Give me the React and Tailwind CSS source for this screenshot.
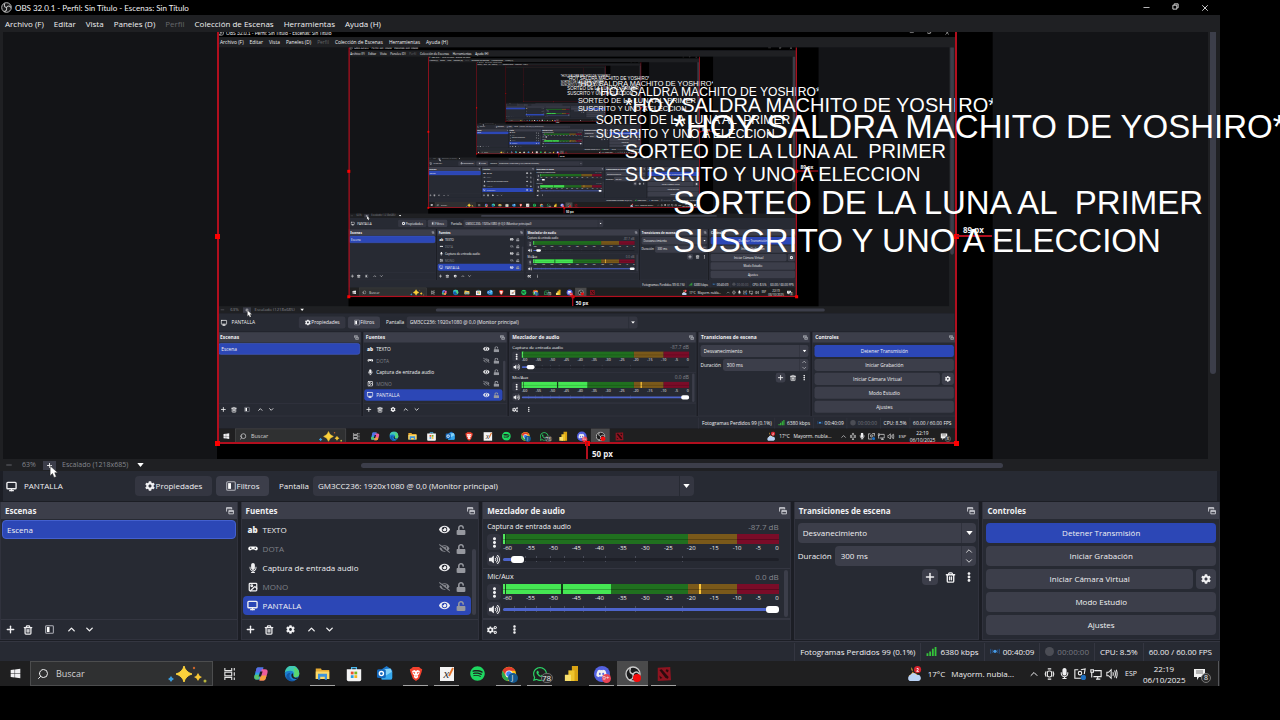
import { ChevronDown, ChevronUp, Image, Minus, Monitor, Plus, Search, Trash2, X } from "lucide-react";
import {
    FaCog,
    FaCogs,
    FaDiscord,
    FaEllipsisV,
    FaEye,
    FaEyeSlash,
    FaMicrophone,
    FaSpotify,
    FaUnlock,
    FaVolumeUp,
    FaWhatsapp,
    FaWindows,
} from "react-icons/fa";

const MIRROR_DEPTH = 6;

const menus = ["Archivo (F)", "Editar", "Vista", "Paneles (D)", "Perfil", "Colección de Escenas", "Herramientas", "Ayuda (H)"];

const sources = [
    { name: "TEXTO", icon: "text", visible: true },
    { name: "DOTA", icon: "game", visible: false },
    { name: "Captura de entrada audio", icon: "mic", visible: true },
    { name: "MONO", icon: "image", visible: false },
    { name: "PANTALLA", icon: "monitor", visible: true, selected: true },
];

const channels = [
    { name: "Captura de entrada audio", db: "-87.7 dB", volume: 3, level: 0 },
    { name: "Mic/Aux", db: "0.0 dB", volume: 100, level: 39, dip: 21, peak: 71 },
];

const scale = ["-60", "-55", "-50", "-45", "-40", "-35", "-30", "-25", "-20", "-15", "-10", "-5", "0"];
const sliderTicks = [4, 8, 12, 17, 22, 29, 37, 48, 65];

const caption = "*HOY SALDRA MACHITO DE YOSHIRO*\n\nSORTEO DE LA LUNA AL  PRIMER\nSUSCRITO Y UNO A ELECCION";

const Caret = () => (
    <svg viewBox="0 0 8 5" className="h-1 w-[7px] fill-white" aria-hidden="true">
        <path d="M0 0h8L4 5z" />
    </svg>
);

const FloatIcon = () => (
    <svg viewBox="0 0 14 14" className="size-2" fill="none" stroke="#d5d6dc" strokeWidth="1.5" aria-hidden="true">
        <path d="M1 8V1h9v3M1 3h9M5 6h8v6H5zM5 8h8" />
    </svg>
);

const FilterIcon = ({ className }) => (
    <svg viewBox="0 0 14 14" className={className} aria-hidden="true">
        <rect x="1" y="1" width="12" height="12" rx="1.5" fill="none" stroke="#aeb0b8" strokeWidth="1.6" />
        <rect x="3" y="3" width="4" height="8" fill="#fff" />
    </svg>
);

const ObsLogo = ({ className }) => (
    <svg viewBox="0 0 24 24" className={className} aria-hidden="true">
        <circle cx="12" cy="12" r="10.5" fill="#1b1b1c" stroke="#c9c9c9" strokeWidth="2" />
        <g fill="none" stroke="#c9c9c9" strokeWidth="2.2" strokeLinecap="round">
            <path d="M8 4c-2 4 0 7 4 8" />
            <path d="M20.900 11.500c-2.400-3.700-6-3.500-8.900.500" />
            <path d="M7.100 20.500c4.400-.300 6.100-3.500 4.900-8.500" />
        </g>
    </svg>
);

const SourceIcon = ({ type }) => {
    if (type === "text") return <span className="font-extrabold leading-none">ab</span>;
    if (type === "game") {
        return (
            <svg viewBox="0 0 20 10" className="w-[10px]" aria-hidden="true">
                <path fill="#fff" d="M5 1h10a4 4 0 0 1 1 8c-2 0-2-2-4-2H8C6 7 6 9 4 9a4 4 0 0 1 1-8z" />
                <circle cx="5.5" cy="4.5" r="1.5" fill="#272a33" />
                <circle cx="14.5" cy="4.5" r="1.5" fill="#272a33" />
            </svg>
        );
    }
    if (type === "mic") return <FaMicrophone className="size-[10px]" />;
    if (type === "image") return <Image className="size-[10px]" strokeWidth={3} />;
    return <Monitor className="size-[11px]" strokeWidth={3} />;
};

const IconButton = ({ label, children, className = "" }) => (
    <button aria-label={label} className={`flex h-4 w-[18px] items-center justify-center ${className}`}>
        {children}
    </button>
);

const Dock = ({ title, footer, children }) => (
    <section className="flex min-w-0 flex-col border-x border-b border-[#30323d] bg-[#272a33]">
        <header className="flex h-[17px] items-center justify-between bg-[#3c3e4a] pl-1 pr-[3px]">
            <h2 className="font-bold">{title}</h2>
            <button aria-label={`Desacoplar ${title}`}>
                <FloatIcon />
            </button>
        </header>
        <div className="flex-1">{children}</div>
        {footer && <footer className="flex h-5 items-center border-t border-[#343641]">{footer}</footer>}
    </section>
);

const Scenes = () => (
    <Dock
        title="Escenas"
        footer={
            <>
                <IconButton label="Añadir escena"><Plus className="size-[11px]" strokeWidth={3} /></IconButton>
                <IconButton label="Eliminar escena"><Trash2 className="size-[10px]" strokeWidth={3} /></IconButton>
                <IconButton label="Filtros de escena" className="ml-[3px]"><FilterIcon className="size-[9px]" /></IconButton>
                <IconButton label="Subir escena" className="ml-1"><ChevronUp className="size-[11px]" strokeWidth={3} /></IconButton>
                <IconButton label="Bajar escena"><ChevronDown className="size-[11px]" strokeWidth={3} /></IconButton>
            </>
        }
    >
        <ul className="p-px">
            <li className="flex h-[19px] items-center rounded-sm border border-[#4460cf] bg-[#2c47b6] pl-1">Escena</li>
        </ul>
    </Dock>
);

const Sources = () => (
    <Dock
        title="Fuentes"
        footer={
            <>
                <IconButton label="Añadir fuente"><Plus className="size-[11px]" strokeWidth={3} /></IconButton>
                <IconButton label="Eliminar fuente"><Trash2 className="size-[10px]" strokeWidth={3} /></IconButton>
                <IconButton label="Propiedades de fuente" className="ml-1"><FaCog className="size-[9px]" /></IconButton>
                <IconButton label="Subir fuente" className="ml-[3px]"><ChevronUp className="size-[11px]" strokeWidth={3} /></IconButton>
                <IconButton label="Bajar fuente"><ChevronDown className="size-[11px]" strokeWidth={3} /></IconButton>
            </>
        }
    >
        <div className="flex p-px">
            <ul className="flex-1">
                {sources.map((source) => (
                    <li
                        key={source.name}
                        className={`flex h-[19px] items-center rounded-sm pr-[5px] ${source.selected ? "bg-[#2c47b6]" : ""}`}
                    >
                        <span className="flex w-5 justify-center">
                            <SourceIcon type={source.icon} />
                        </span>
                        <span className={`flex-1 ${source.visible ? "" : "text-[#7f8188]"}`}>{source.name}</span>
                        <button aria-label={`Visibilidad de ${source.name}`} className="flex w-[17px]">
                            {source.visible ? <FaEye className="size-[11px]" /> : <FaEyeSlash className="size-[11px] text-[#85878e]" />}
                        </button>
                        <button aria-label={`Bloquear ${source.name}`}>
                            <FaUnlock className="size-[10px] text-[#96989f]" />
                        </button>
                    </li>
                ))}
            </ul>
            <div className="flex w-[6px] flex-col justify-end pl-px">
                <div className="h-[66px] w-1 rounded-full bg-[#3c3e4a]" />
            </div>
        </div>
    </Dock>
);

const Channel = ({ channel }) => (
    <div className="h-[50px] border-b border-[#343641] pl-1 pr-[11px]">
        <div className="flex h-[15px] items-center justify-between">
            <span className="text-[7px]">{channel.name}</span>
            <span className="text-[#85878e]">{channel.db}</span>
        </div>
        <div className="flex gap-[2px]">
            <button aria-label={`Opciones de ${channel.name}`} className="flex h-4 w-[14px] items-center justify-center rounded-sm bg-[#32343f]">
                <FaEllipsisV className="size-[11px]" />
            </button>
            <div className="flex-1">
                <div className="relative flex h-[10px]">
                    <div className="w-[67%] bg-[#20701f]" />
                    <div className="w-[18%] bg-[#7a591a]" />
                    <div className="w-[15%] bg-[#7a0c28]" />
                    <div className="absolute inset-y-0 left-0 bg-[#45e653]" style={{ width: `${channel.level}%` }} />
                    <div className="absolute inset-y-0 left-0 w-[3px] border-r border-[#15401b] bg-[#53e95e]" />
                    {channel.dip && <div className="absolute inset-y-0 w-[2px] bg-[#133b18]" style={{ left: `${channel.dip}%` }} />}
                    {channel.peak && <div className="absolute inset-y-0 w-[2px] bg-[#ffc83c]" style={{ left: `${channel.peak}%` }} />}
                    <div className="absolute inset-x-0 top-[5px] h-px bg-black/25" />
                </div>
                <div className="flex h-2 justify-between text-[6px] leading-[8px]">
                    {scale.map((mark) => (
                        <span key={mark}>{mark}</span>
                    ))}
                </div>
            </div>
        </div>
        <div className="flex h-[14px] items-center gap-[2px]">
            <button aria-label={`Silenciar ${channel.name}`} className="flex h-[14px] w-[14px] items-center justify-center rounded-sm bg-[#32343f]">
                <FaVolumeUp className="size-[11px]" />
            </button>
            <div className="relative flex h-[14px] flex-1 items-center">
                {sliderTicks.map((tick) => (
                    <span key={tick} className="absolute inset-y-1 w-px bg-[#4a4d5a]" style={{ left: `${tick}%` }} />
                ))}
                <input
                    type="range"
                    aria-label={`Volumen de ${channel.name}`}
                    defaultValue={channel.volume}
                    className="relative h-[3px] w-full appearance-none rounded-full [&::-webkit-slider-thumb]:h-[7px] [&::-webkit-slider-thumb]:w-[13px] [&::-webkit-slider-thumb]:appearance-none [&::-webkit-slider-thumb]:rounded-[3px] [&::-webkit-slider-thumb]:bg-white"
                    style={{ background: `linear-gradient(to right, #4d64cb ${channel.volume}%, #1e2028 ${channel.volume}%)` }}
                />
            </div>
        </div>
    </div>
);

const Mixer = () => (
    <Dock
        title="Mezclador de audio"
        footer={
            <>
                <IconButton label="Propiedades avanzadas de audio"><FaCogs className="size-[10px]" /></IconButton>
                <IconButton label="Menú del mezclador" className="ml-1"><FaEllipsisV className="size-[9px]" /></IconButton>
            </>
        }
    >
        <div className="relative">
            {channels.map((channel) => (
                <Channel key={channel.name} channel={channel} />
            ))}
            <div className="absolute bottom-[2px] right-[2px] h-[47px] w-1 rounded-full bg-[#3c3e4a]" />
        </div>
    </Dock>
);

const Transitions = ({ id }) => (
    <Dock title="Transiciones de escena">
        <div className="flex flex-col gap-[3px] py-1 pl-[3px] pr-[2px]">
            <div className="relative flex items-center">
                <select aria-label="Transición" className="h-5 w-full appearance-none rounded-sm bg-[#3c3e4a] pl-[5px]">
                    <option>Desvanecimiento</option>
                </select>
                <span className="pointer-events-none absolute inset-y-0 right-0 flex w-[15px] items-center justify-center border-l border-[#30323d]">
                    <Caret />
                </span>
            </div>
            <div className="flex items-center gap-[3px]">
                <label htmlFor={`${id}-duration`}>Duración</label>
                <div className="flex h-5 min-w-0 flex-1 rounded-sm bg-[#3c3e4a]">
                    <input id={`${id}-duration`} defaultValue="300 ms" className="w-full min-w-0 flex-1 pl-[6px]" />
                    <div className="flex w-[15px] flex-col items-center justify-center border-l border-[#30323d]">
                        <button aria-label="Aumentar duración"><ChevronUp className="size-[10px]" /></button>
                        <button aria-label="Reducir duración"><ChevronDown className="size-[10px]" /></button>
                    </div>
                </div>
            </div>
            <div className="flex justify-end">
                <button aria-label="Añadir transición" className="flex h-4 w-4 items-center justify-center rounded-sm bg-[#3c3e4a]">
                    <Plus className="size-3" strokeWidth={3} />
                </button>
                <button aria-label="Eliminar transición" className="flex h-4 w-6 items-center justify-center">
                    <Trash2 className="size-[11px]" strokeWidth={3} />
                </button>
                <button aria-label="Más opciones" className="flex h-4 w-[14px] items-center justify-center">
                    <FaEllipsisV className="size-[10px]" />
                </button>
            </div>
        </div>
    </Dock>
);

const Controls = () => (
    <Dock title="Controles">
        <div className="flex flex-col gap-[3px] px-[3px] py-1">
            <button className="h-5 rounded-sm bg-[#2c47b6]">Detener Transmisión</button>
            <button className="h-5 rounded-sm bg-[#3c3e4a]">Iniciar Grabación</button>
            <div className="flex gap-[3px]">
                <button className="h-5 flex-1 rounded-sm bg-[#3c3e4a]">Iniciar Cámara Virtual</button>
                <button aria-label="Configurar cámara virtual" className="flex h-5 w-5 items-center justify-center rounded-sm bg-[#3c3e4a]">
                    <FaCog className="size-[10px]" />
                </button>
            </div>
            <button className="h-5 rounded-sm bg-[#3c3e4a]">Modo Estudio</button>
            <button className="h-5 rounded-sm bg-[#3c3e4a]">Ajustes</button>
        </div>
    </Dock>
);

const StatusBar = () => (
    <div className="flex h-5 items-center justify-end border-t border-[#343641] bg-[#272a33] pr-[3px] [&>div]:flex [&>div]:h-[18px] [&>div]:items-center [&>div]:gap-[3px] [&>div]:border-l [&>div]:border-[#343641] [&>div]:px-[5px]">
        <div>Fotogramas Perdidos 99 (0.1%)</div>
        <div>
            <svg viewBox="0 0 11 10" className="h-[9px] w-[11px] fill-[#35c53b]" aria-hidden="true">
                <path d="M0 7h2v3H0zM3 5h2v5H3zM6 2h2v8H6zM9 0h2v10H9z" />
            </svg>
            6380 kbps
        </div>
        <div>
            <svg viewBox="0 0 12 8" className="w-[10px]" aria-hidden="true">
                <path d="M1 1q-1 3 0 6M11 1q1 3 0 6M3 2q-1 2 0 4M9 2q1 2 0 4" fill="none" stroke="#285c9b" />
                <circle cx="6" cy="4" r="2" fill="#479be8" />
            </svg>
            00:40:09
        </div>
        <div className="text-[#777981]">
            <span className="size-[9px] rounded-full bg-[#4b4d55]" />
            00:00:00
        </div>
        <div>CPU: 8.5%</div>
        <div>60.00 / 60.00 FPS</div>
    </div>
);

const Copilot = () => (
    <svg viewBox="0 0 20 20" className="size-4">
        <path d="M6 2h7l-4 15H5c-3 0-4-2-3-5l2-7c.4-2 1-3 2-3z" fill="#2c9fe8" />
        <path d="M6 2h7l-2 6H3l1-3c.4-2 1-3 2-3z" fill="#5b6be6" />
        <path d="M11 4h4c3 0 4 2 3 5l-2 6c-.5 2-1 3-3 3H8z" fill="#ee5c9b" />
        <path d="M10 12h7l-1 3c-.5 2-1 3-3 3H8z" fill="#f5a13c" />
        <path d="M3 11h6l-2 6H5c-3 0-4-2-3-5z" fill="#5ac36b" />
        <path d="M9 7h3l-2 6H7z" fill="#1f1f20" />
    </svg>
);

const Edge = () => (
    <svg viewBox="0 0 20 20" className="size-4">
        <circle cx="10" cy="10" r="9" fill="#1b7fd1" />
        <path d="M1 9a9 9 0 0 1 18-1c1 4-2 6-5 6-2 0-3-1-2-2 1-4-1-6-4-6-4 0-6 1-7 3z" fill="#3fc9b5" />
        <path d="M12 2a9 9 0 0 1 7 8c0 3-3 4-5 4-2 0-3-1-2-2 2-4 1-7 0-10z" fill="#58d66f" />
        <path d="M8 9c-3 4 0 9 6 9-5 3-12 0-11-6 1-3 3-4 5-3z" fill="#1459a8" />
        <path d="M11 9c-3 1-2 6 2 7 2 .5 4 0 5-2-2 1-4 1-5 0-2-1-1-2-2-5z" fill="#1f1f20" />
    </svg>
);

const Explorer = () => (
    <svg viewBox="0 0 20 18" className="w-[15px]">
        <path d="M1 2h7l1 2h10v12H1z" fill="#e8ac33" />
        <path d="M1 6h18v10H1z" fill="#fbd867" />
        <path d="M4 9h12v8h-3v-4H7v4H4z" fill="#3f93da" />
    </svg>
);

const Store = () => (
    <svg viewBox="0 0 20 20" className="size-4">
        <path d="M7 5V2h6v3" fill="none" stroke="#4bb8ed" strokeWidth="1.6" />
        <path d="M1 4h18v13q0 2-2 2H3q-2 0-2-2z" fill="#f3f3f3" />
        <path d="M6 7h3.5v3.5H6z" fill="#e9512d" />
        <path d="M10.5 7H14v3.5h-3.5z" fill="#7ab51d" />
        <path d="M6 11.5h3.5V15H6z" fill="#2a9fe0" />
        <path d="M10.5 11.5H14V15h-3.5z" fill="#f6b51b" />
    </svg>
);

const Outlook = () => (
    <svg viewBox="0 0 20 18" className="w-4">
        <path d="M6 4l6-4 7 5v10q0 2-2 2H6z" fill="#1b77cc" />
        <path d="M8 4l9-1 2 5-8 5z" fill="#83d2f7" />
        <path d="M5 16l14-9v8q0 2-2 2H6z" fill="#35a8ed" />
        <rect y="4" width="11" height="11" rx="2" fill="#1469bd" />
        <circle cx="5.5" cy="9.5" r="2.6" fill="none" stroke="#fff" strokeWidth="1.7" />
    </svg>
);

const Brave = () => (
    <svg viewBox="0 0 18 20" className="h-4 w-[14px]">
        <path d="M5 1h8l2 2 2 1-1 4-3 8-4 3-4-3-3-8-1-4 2-1z" fill="#f4412d" />
        <path d="M4 6l3-1 2 1 2-1 3 1-1 4-2 2 1 2-3 2-3-2 1-2-2-2z" fill="#fff" />
        <path d="M5 7l3 1-1 2zM13 7l-3 1 1 2zM8 12h2l-1 2z" fill="#f4412d" />
    </svg>
);

const Chrome = () => (
    <span className="relative">
        <svg viewBox="0 0 20 20" className="size-4">
            <circle cx="10" cy="10" r="9" fill="#fbc116" />
            <path d="M2 6a9 9 0 0 1 16 0h-8L6 12z" fill="#e33b2e" />
            <path d="M2 6l5 8 3 0-2 5A9 9 0 0 1 2 6z" fill="#2da94f" />
            <circle cx="10" cy="10" r="4.5" fill="#fff" />
            <circle cx="10" cy="10" r="3.5" fill="#4184f3" />
        </svg>
        <span className="absolute -bottom-px -right-px flex size-[10px] items-center justify-center rounded-full bg-[#14598f] text-[7px] leading-none">J</span>
    </span>
);

const WhatsApp = () => (
    <span className="relative">
        <FaWhatsapp className="size-4 text-[#2bd366]" />
        <span className="absolute -bottom-px left-[9px] flex h-[10px] w-3 items-center justify-center rounded-full border border-[#6a6a6a] bg-[#2b2b2b] leading-none">78</span>
    </span>
);

const PowerBi = () => (
    <svg viewBox="0 0 16 18" className="w-[14px]">
        <path d="M9 0h7v18H9z" fill="#d9a313" />
        <path d="M5 5h7v13H5z" fill="#efc42d" />
        <path d="M1 10h7v8H1z" fill="#f8df6d" />
    </svg>
);

const Discord = () => (
    <span className="relative flex size-4 items-center justify-center rounded-full bg-[#5361e0]">
        <FaDiscord className="size-[11px]" />
        <span className="absolute -bottom-px -right-px flex size-[9px] items-center justify-center rounded-full bg-[#e84455] text-[6px] leading-none">9+</span>
    </span>
);

const ObsTask = () => (
    <span className="relative">
        <ObsLogo className="size-4" />
        <span className="absolute bottom-0 right-0 size-2 rounded-full bg-[#f50c0c]" />
    </span>
);

const Dota = () => (
    <svg viewBox="0 0 18 18" className="size-[14px]">
        <path d="M1 1l16-1 1 17-17 1z" fill="#8f1420" />
        <path d="M3 4l3-1 9 10-1 2-3-1zM12 3l3 1-1 3-3-2zM3 11l4 3-3 1z" fill="#2c0a0d" />
    </svg>
);

const TaskView = () => (
    <svg viewBox="0 0 14 14" className="size-3" fill="none" stroke="#e4e4e4" strokeWidth="1.3">
        <path d="M1 0v3h8V0M1 14v-3h8v3M1 5h8v4H1zM12 0v3M12 11v3M12 5v4" />
    </svg>
);

const Editor = () => (
    <span className="relative flex size-[14px] items-center justify-center bg-[#f4f4f4] font-['Liberation_Serif',serif] text-[13px] italic leading-none text-[#3a3a3a]">
        x
        <svg viewBox="0 0 14 14" className="absolute inset-0" stroke="#e5742a" strokeWidth="1.8">
            <path d="M13 1L9 9" />
        </svg>
    </span>
);

const taskIcons = [
    { name: "Vista de tareas", icon: <TaskView /> },
    { name: "Copilot", icon: <Copilot /> },
    { name: "Microsoft Edge", icon: <Edge /> },
    { name: "Explorador de archivos", icon: <Explorer />, open: true },
    { name: "Microsoft Store", icon: <Store /> },
    { name: "Outlook", icon: <Outlook /> },
    { name: "Brave", icon: <Brave />, open: true },
    { name: "Editor", icon: <Editor />, open: true },
    { name: "Spotify", icon: <FaSpotify className="size-[15px] text-[#1ed760]" /> },
    { name: "Chrome", icon: <Chrome />, open: true },
    { name: "WhatsApp", icon: <WhatsApp />, open: true },
    { name: "Power BI", icon: <PowerBi /> },
    { name: "Discord", icon: <Discord />, open: true },
    { name: "OBS Studio", icon: <ObsTask />, active: true },
    { name: "Dota 2", icon: <Dota />, open: true },
];

const Taskbar = ({ id }) => (
    <div className="flex h-[25px] items-center bg-[#1f1f20]">
        <button aria-label="Inicio" className="flex w-[30px] justify-center">
            <FaWindows className="size-[11px]" />
        </button>
        <div className="flex h-[25px] w-[183px] items-center border border-[#4c4d4e] bg-[#2f3031] pl-[6px] pr-[5px]">
            <Search className="size-3 -scale-x-100" strokeWidth={2} />
            <input
                id={`${id}-search`}
                aria-label="Buscar"
                placeholder="Buscar"
                className="ml-[7px] min-w-0 flex-1 text-[9px] placeholder:text-[#d2d2d2]"
            />
            <svg viewBox="0 0 40 18" className="w-10" aria-hidden="true">
                <path d="M17 1q1.5 6 8 8-6.5 2-8 8-1.5-6-8-8 6.5-2 8-8z" fill="#fbd13b" stroke="#fbd13b" />
                <path d="M31 8q1 3 4 4-3 1-4 4-1-3-4-4 3-1 4-4z" fill="#f5c534" />
                <path d="M4 11q1 2 3 3-2 1-3 3-1-2-3-3 2-1 3-3z" fill="#3c9fe0" />
                <circle cx="27" cy="3" r="1.2" fill="#c8642c" />
                <circle cx="38" cy="16" r="1.5" fill="#b8b63d" />
            </svg>
        </div>
        <div className="flex h-full pl-px">
            {taskIcons.map((task) => (
                <button
                    key={task.name}
                    aria-label={task.name}
                    className={`relative flex w-[31px] items-center justify-center ${task.active ? "bg-[#4a4a4b]" : ""}`}
                >
                    {task.icon}
                    {(task.open || task.active) && (
                        <span className={`absolute bottom-0 h-px bg-[#a3a3a3] ${task.active ? "inset-x-0" : "inset-x-[3px]"}`} />
                    )}
                </button>
            ))}
        </div>
        <div className="ml-auto flex h-full items-center">
            <button className="flex items-center gap-[6px]">
                <svg viewBox="0 0 18 18" className="size-4" aria-hidden="true">
                    <path d="M6 1a7 7 0 0 0 7 8l-4 4-6-2a6 6 0 0 0 3-10z" fill="#f7b23a" />
                    <path d="M4 17a4 4 0 0 1 1-7 4 4 0 0 1 7 0 3.5 3.5 0 0 1 2 7z" fill="#b9d2f5" />
                    <circle cx="13" cy="4" r="4" fill="#d9232e" />
                    <path d="M12 3q2-1 2 .5L12 6h2.5" stroke="#fff" fill="none" />
                </svg>
                <span>17°C</span>
                <span>Mayorm. nubla...</span>
            </button>
            <div className="ml-[14px] flex items-center gap-1">
                <ChevronUp className="size-3" />
                <svg viewBox="0 0 12 14" className="h-3 w-[11px]" fill="none" stroke="#eee" strokeWidth="1.3" aria-hidden="true">
                    <path d="M4 1h4M4 13h4M2 4l-1 3 1 3M10 4l1 3-1 3" />
                    <rect x="3.5" y="3.5" width="5" height="7" rx="2" />
                </svg>
                <FaMicrophone className="size-[11px]" />
                <svg viewBox="0 0 14 14" className="size-3" fill="none" stroke="#eee" strokeWidth="1.3" aria-hidden="true">
                    <path d="M5 2H1v10h7M8 2l5-1-1 6" />
                    <circle cx="7" cy="6" r="2" />
                    <circle cx="11" cy="11" r="3" fill="#1f6fbf" stroke="none" />
                </svg>
                <svg viewBox="0 0 14 14" className="size-3" fill="none" stroke="#eee" strokeWidth="1.3" aria-hidden="true">
                    <path d="M5 3h8v7H4M1 2h3v3H1zM2 5v6M7 13h5M9 10v3" />
                </svg>
                <svg viewBox="0 0 14 14" className="size-3" fill="none" stroke="#eee" strokeWidth="1.2" aria-hidden="true">
                    <path d="M1 5h2l3-3v10L3 9H1zM8 5q1 2 0 4M10 3q2 4 0 8M12 2q2 5 0 10" />
                </svg>
            </div>
            <button className="ml-[5px] px-[2px] text-[7px]">ESP</button>
            <div className="ml-1 w-[42px] text-center leading-[11px]">
                <p>22:19</p>
                <p>06/10/2025</p>
            </div>
            <button aria-label="Notificaciones" className="relative ml-[9px] mr-[12px]">
                <svg viewBox="0 0 12 12" className="size-3" aria-hidden="true">
                    <path d="M0 1h11v8H5l-2 3V9H0z" fill="#f2f2f2" />
                    <path d="M2 3h7M2 5h7" stroke="#777" />
                </svg>
                <span className="absolute -bottom-[3px] -right-[5px] flex size-[10px] items-center justify-center rounded-full border border-[#777] bg-[#2b2b2b] text-[7px] leading-none">8</span>
            </button>
            <span className="mr-px h-full w-px bg-[#55565a]" />
        </div>
    </div>
);

// Outline of the captured monitor with its handles and distance guides
const Selection = () => (
    <>
        <div className="absolute -top-1 left-[214px] h-[416px] w-[740px] border-2 border-[#b10f1e]">
            <span className="absolute -left-1 top-[204px] size-[5px] bg-[#f00]" />
            <span className="absolute -bottom-1 -left-1 size-[5px] bg-[#f00]" />
            <span className="absolute -bottom-1 left-[366px] size-[5px] bg-[#f00]" />
            <span className="absolute -bottom-1 -right-1 size-[5px] bg-[#f00]" />
            <span className="absolute -right-1 top-[204px] size-[5px] bg-[#f00]" />
        </div>
        <span className="absolute left-[583px] top-[410px] h-[17px] w-[2px] bg-[#b10f1e]" />
        <span className="absolute left-[953px] top-[203px] h-[2px] w-9 bg-[#b10f1e]" />
        <span className="absolute left-[589px] top-[416px] font-bold">50 px</span>
        <span className="absolute left-[960px] top-[192px] font-bold">89 px</span>
    </>
);

const Preview = ({ depth }) => (
    <div className="relative flex-1 overflow-hidden bg-[#131417]">
        {depth < MIRROR_DEPTH && (
            <div inert className="absolute -top-1 left-[214px] flex h-[720px] w-[1280px] origin-top-left scale-[0.606]">
                <Screen depth={depth + 1} />
            </div>
        )}
        <Selection />
    </div>
);

const ZoomBar = () => (
    <div className="flex h-3 items-center text-[7px] text-[#85878e]">
        <button aria-label="Alejar" className="ml-[2px] flex w-[10px]"><Minus className="size-2" /></button>
        <span className="ml-[7px] w-[18px]">63%</span>
        <button aria-label="Acercar" className="ml-[3px] flex h-[9px] w-[13px] items-center justify-center bg-[#3c3e4a] text-white">
            <Plus className="size-[7px]" strokeWidth={3} />
        </button>
        <button className="ml-[6px] flex items-center gap-[9px]">
            Escalado (1218x685)
            <Caret />
        </button>
        <div className="ml-[18%] mr-[17%] h-[5px] flex-1 rounded-sm bg-[#3c3e4a]" />
    </div>
);

const ContextBar = ({ id }) => (
    <div className="mx-[3px] flex h-[30px] items-center bg-[#272a33]">
        <div className="flex w-[132px] items-center gap-[7px] pl-[3px]">
            <Monitor className="size-[11px]" strokeWidth={3} />
            PANTALLA
        </div>
        <button className="flex h-5 w-[77px] items-center justify-center gap-px rounded-sm bg-[#343641]">
            <FaCog className="size-[10px]" />
            Propiedades
        </button>
        <button className="ml-1 flex h-5 w-[53px] items-center justify-center gap-px rounded-sm bg-[#3c3e4a]">
            <FilterIcon className="size-[10px]" />
            Filtros
        </button>
        <label htmlFor={`${id}-display`} className="ml-[10px]">Pantalla</label>
        <div className="relative ml-1 w-[381px]">
            <select id={`${id}-display`} className="h-5 w-full appearance-none rounded-sm bg-[#343641] pl-[5px]">
                <option>GM3CC236: 1920x1080 @ 0,0 (Monitor principal)</option>
            </select>
            <span className="pointer-events-none absolute inset-y-0 right-0 flex w-[15px] items-center justify-center border-l border-[#272a33]">
                <Caret />
            </span>
        </div>
    </div>
);

const Desktop = ({ depth }) => {
    const id = `screen-${depth}`;

    return (
        <div className="relative flex min-h-0 flex-1 flex-col bg-[#1c1e25] font-['Open_Sans',sans-serif] text-[8px] leading-[12px] text-[#f0f0f2]">
            {/* Title bar */}
            <div className="flex h-[15px] items-center bg-black font-[Lato,sans-serif]">
                <ObsLogo className="ml-px size-[11px]" />
                <h1 className="ml-[3px]">OBS 32.0.1 - Perfil: Sin Título - Escenas: Sin Título</h1>
                <div className="ml-auto mr-px flex">
                    <button aria-label="Minimizar" className="flex w-[29px] justify-center"><Minus className="size-[9px]" /></button>
                    <button aria-label="Restaurar" className="flex w-[29px] justify-center">
                        <svg viewBox="0 0 8 8" className="size-[7px]" fill="none" stroke="#eee">
                            <path d="M1 2.5h4.5V7H1zM2.5 2V1H7v4.5H6" />
                        </svg>
                    </button>
                    <button aria-label="Cerrar" className="flex w-[29px] justify-center"><X className="size-[10px]" /></button>
                </div>
            </div>

            <nav className="flex h-[17px] items-center bg-[#1f2023]">
                {menus.map((menu) => (
                    <button key={menu} className={`px-[5px] ${menu === "Perfil" ? "text-[#66676b]" : ""}`}>
                        {menu}
                    </button>
                ))}
            </nav>

            {/* Preview */}
            <div className="flex min-h-0 flex-1 bg-[#1f2023] pl-[3px]">
                <div className="flex min-w-0 flex-1 flex-col">
                    <Preview depth={depth} />
                    <ZoomBar />
                </div>
                <div className="w-3 pl-[2px]">
                    <div className="h-[78%] w-[6px] rounded-b-sm bg-[#3c3e4a]" />
                </div>
            </div>

            <ContextBar id={id} />

            <div className="mt-px grid grid-cols-[238fr_239fr_309fr_186fr_238fr] gap-[3px]">
                <Scenes />
                <Sources />
                <Mixer />
                <Transitions id={id} />
                <Controls />
            </div>

            <div className="mt-px">
                <StatusBar />
                <Taskbar id={id} />
            </div>

            <svg viewBox="0 0 12 18" className="absolute left-[49px] top-[465px] h-[14px] w-[10px]" aria-hidden="true">
                <path d="M1 1v13l3-3 2 5 3-1-2-5h4z" fill="#fff" stroke="#222" strokeWidth=".7" />
            </svg>
        </div>
    );
};

const Screen = ({ depth }) => (
    <div className="relative flex min-w-0 flex-1 flex-col overflow-hidden bg-black pb-[34px] pr-[60px]">
        <Desktop depth={depth} />
        <p className="pointer-events-none absolute left-[673px] top-[108px] whitespace-pre font-['Liberation_Sans',sans-serif] text-[33px] leading-[38px] text-white">
            {caption}
        </p>
    </div>
);

const App = () => (
    <div className="flex min-h-screen bg-black">
        <Screen depth={1} />
    </div>
);

export default App;
